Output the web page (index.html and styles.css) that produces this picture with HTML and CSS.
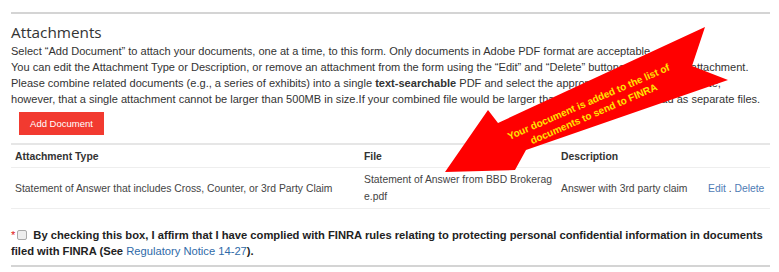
FILE: index.html
```html
<!DOCTYPE html>
<html>
<head>
<meta charset="utf-8">
<link rel="stylesheet" href="styles.css">
</head>
<body>
<div class="page">
  <div class="section">
    <h2 class="title">Attachments</h2>
    <p class="intro">Select “Add Document” to attach your documents, one at a time, to this form. Only documents in Adobe PDF format are acceptable.<br>You can edit the Attachment Type or Description, or remove an attachment from the form using the “Edit” and “Delete” buttons next to each attachment.<br>Please combine related documents (e.g., a series of exhibits) into a single <b>text-searchable</b> PDF and select the appropriate file type. Please note,<br>however, that a single attachment cannot be larger than 500MB in size.If your combined file would be larger than 500MB, please upload as separate files.</p>
    <div class="actions"><button class="btn-add">Add Document</button></div>
    <table class="grid">
      <thead>
        <tr><th class="c-type">Attachment Type</th><th class="c-file">File</th><th class="c-desc">Description</th><th class="c-act"></th></tr>
      </thead>
      <tbody>
        <tr>
          <td class="c-type">Statement of Answer that includes Cross, Counter, or 3rd Party Claim</td>
          <td class="c-file">Statement of Answer from BBD Brokerag<br>e.pdf</td>
          <td class="c-desc">Answer with 3rd party claim</td>
          <td class="c-act"><a class="lnk">Edit</a> . <a class="lnk">Delete</a></td>
        </tr>
      </tbody>
    </table>
    <div class="affirm">
      <span class="req">*</span><span class="box"></span><b>By checking this box, I affirm that I have complied with FINRA rules relating to protecting personal confidential information in documents filed with FINRA (See <a class="notice">Regulatory Notice 14-27</a>).</b>
    </div>
  </div>
  <svg class="callout" width="779" height="272" viewBox="0 0 779 272">
    <polygon fill="#ff0000" points="445,172 488,110 498,123 705,27 692,66 728,80 526,150 515,170"/>
    <g transform="translate(590,105) rotate(-23.5)" class="callout-text">
      <text x="0" y="0" text-anchor="middle">Your document is added to the list of</text>
      <text x="0" y="13" text-anchor="middle">documents to send to FINRA</text>
    </g>
  </svg>
</div>
</body>
</html>
```

FILE: styles.css
```css
html, body {
  margin: 0;
  padding: 0;
  background: #fff;
}
.page {
  position: relative;
  width: 779px;
  height: 272px;
  overflow: hidden;
  font-family: "Liberation Sans", Arial, sans-serif;
  color: #333;
}
.section {
  margin: 12px 9px 0 11px;
  border-top: 2px solid #d4d4d4;
}
.title {
  margin: 7px 0 0 0;
  font-family: "Open Sans", sans-serif;
  font-weight: 400;
  font-size: 15.3px;
  line-height: 22px;
  color: #333;
}
.intro {
  margin: 0;
  font-size: 11.05px;
  line-height: 16px;
  white-space: nowrap;
}
.actions {
  padding: 5px 0 0 8px;
}
.btn-add {
  display: block;
  width: 85px;
  height: 23px;
  border: none;
  background: #f23a30;
  color: #fff;
  font-family: "Liberation Sans", Arial, sans-serif;
  font-size: 9.5px;
  padding: 0;
}
.grid {
  margin-top: 8px;
  width: 100%;
  table-layout: fixed;
  border-collapse: collapse;
  border-top: 2px solid #e6e6e6;
  font-size: 10.35px;
  color: #444;
}
.grid th {
  text-align: left;
  font-weight: bold;
  padding: 0 4px;
  height: 22px;
  border-bottom: 1px solid #eee;
  color: #333;
  font-size: 10.4px;
}
.grid td {
  padding: 3px 4px;
  height: 34px;
  line-height: 17px;
  border-bottom: 1px solid #eee;
  vertical-align: middle;
  white-space: nowrap;
}
.c-type { width: 341px; }
.c-file { width: 189px; }
.c-desc { width: 139px; }
.c-act { text-align: left; }
.lnk {
  color: #4f7cb5;
}
.affirm {
  margin-top: 18px;
  padding-bottom: 6px;
  border-bottom: 2px solid #d4d4d4;
  font-size: 11.2px;
  line-height: 16px;
  color: #222;
}
.req {
  color: #e02020;
  margin-right: 2px;
}
.box {
  display: inline-block;
  width: 8px;
  height: 8px;
  border: 1px solid #aaa;
  border-radius: 2px;
  background: #eee;
  margin-right: 6px;
  vertical-align: -1px;
}
.notice {
  color: #2f6aa8;
  font-weight: normal;
}
.callout {
  position: absolute;
  left: 0;
  top: 0;
}
.callout-text {
  font-family: "Liberation Sans", Arial, sans-serif;
  font-weight: bold;
  font-size: 10px;
  fill: #ffe400;
}
```
